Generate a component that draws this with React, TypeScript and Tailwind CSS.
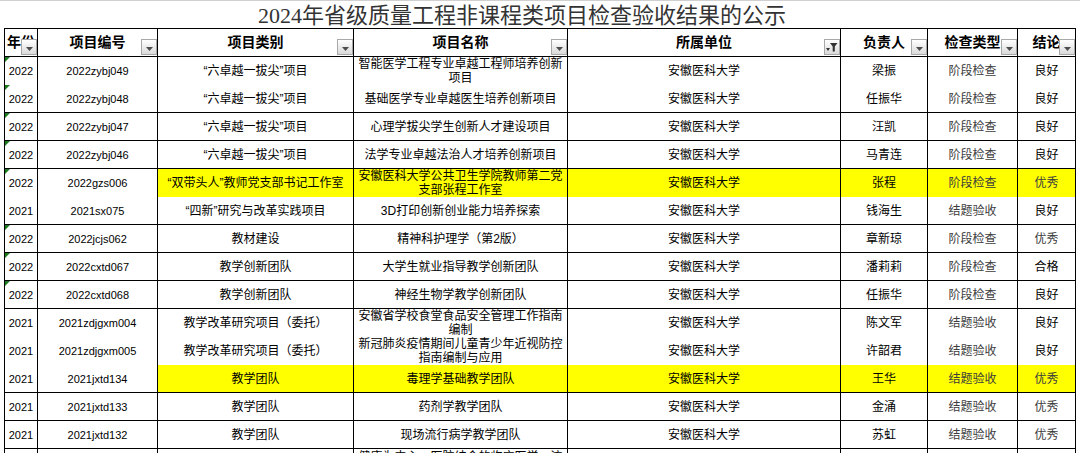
import React from 'react';

const COLS = 'grid grid-cols-[33px_120px_196px_214px_273px_87px_90px_58px]';
const FONT = "font-['Liberation_Sans','Noto_Sans_CJK_SC',sans-serif]";

type Row = {
  year: string;
  code: string;
  kind: string;
  name: string;
  unit: string;
  owner: string;
  check: string;
  result: string;
  hl?: boolean;
};

const rows: Row[] = [
  { year: '2022', code: '2022zybj049', kind: '“六卓越一拔尖”项目', name: '智能医学工程专业卓越工程师培养创新项目', unit: '安徽医科大学', owner: '梁振', check: '阶段检查', result: '良好' },
  { year: '2022', code: '2022zybj048', kind: '“六卓越一拔尖”项目', name: '基础医学专业卓越医生培养创新项目', unit: '安徽医科大学', owner: '任振华', check: '阶段检查', result: '良好' },
  { year: '2022', code: '2022zybj047', kind: '“六卓越一拔尖”项目', name: '心理学拔尖学生创新人才建设项目', unit: '安徽医科大学', owner: '汪凯', check: '阶段检查', result: '良好' },
  { year: '2022', code: '2022zybj046', kind: '“六卓越一拔尖”项目', name: '法学专业卓越法治人才培养创新项目', unit: '安徽医科大学', owner: '马青连', check: '阶段检查', result: '良好' },
  { year: '2022', code: '2022gzs006', kind: '“双带头人”教师党支部书记工作室', name: '安徽医科大学公共卫生学院教师第二党支部张程工作室', unit: '安徽医科大学', owner: '张程', check: '阶段检查', result: '优秀', hl: true },
  { year: '2021', code: '2021sx075', kind: '“四新”研究与改革实践项目', name: '3D打印创新创业能力培养探索', unit: '安徽医科大学', owner: '钱海生', check: '结题验收', result: '良好' },
  { year: '2022', code: '2022jcjs062', kind: '教材建设', name: '精神科护理学（第2版）', unit: '安徽医科大学', owner: '章新琼', check: '阶段检查', result: '优秀' },
  { year: '2022', code: '2022cxtd067', kind: '教学创新团队', name: '大学生就业指导教学创新团队', unit: '安徽医科大学', owner: '潘莉莉', check: '阶段检查', result: '合格' },
  { year: '2022', code: '2022cxtd068', kind: '教学创新团队', name: '神经生物学教学创新团队', unit: '安徽医科大学', owner: '任振华', check: '阶段检查', result: '良好' },
  { year: '2021', code: '2021zdjgxm004', kind: '教学改革研究项目（委托）', name: '安徽省学校食堂食品安全管理工作指南编制', unit: '安徽医科大学', owner: '陈文军', check: '结题验收', result: '良好' },
  { year: '2021', code: '2021zdjgxm005', kind: '教学改革研究项目（委托）', name: '新冠肺炎疫情期间儿童青少年近视防控指南编制与应用', unit: '安徽医科大学', owner: '许韶君', check: '结题验收', result: '良好' },
  { year: '2021', code: '2021jxtd134', kind: '教学团队', name: '毒理学基础教学团队', unit: '安徽医科大学', owner: '王华', check: '结题验收', result: '优秀', hl: true },
  { year: '2021', code: '2021jxtd133', kind: '教学团队', name: '药剂学教学团队', unit: '安徽医科大学', owner: '金涌', check: '结题验收', result: '优秀' },
  { year: '2021', code: '2021jxtd132', kind: '教学团队', name: '现场流行病学教学团队', unit: '安徽医科大学', owner: '苏虹', check: '结题验收', result: '优秀' },
];

function FilterBtn({ active }: { active?: boolean }) {
  return (
    <span className="absolute right-0 bottom-[1px] flex h-[16px] w-[16px] items-center justify-center border border-[#a8a8a8] bg-linear-to-b from-white to-[#dadada]">
      {active ? (
        <svg width="12" height="10" viewBox="0 0 12 10">
          <path d="M0 6h4L2 9z" fill="#333" />
          <path d="M4 1h7.5L8.8 4.5V9.5H6.7V4.5z" fill="#333" />
        </svg>
      ) : (
        <svg width="7" height="4" viewBox="0 0 7 4" className="mt-[3px]">
          <path d="M0 0h7L3.5 4z" fill="#4d4d4d" />
        </svg>
      )}
    </span>
  );
}

function Cell({
  children,
  hl,
  className = '',
}: {
  children?: React.ReactNode;
  hl?: boolean;
  className?: string;
}) {
  return (
    <div
      className={`relative flex items-center justify-center overflow-visible border-r border-b border-black px-[1px] text-center leading-[14px] whitespace-normal ${hl ? 'bg-[#ffff00]' : 'bg-white'} ${className}`}
    >
      {children}
    </div>
  );
}

export default function App() {
  const headers = ['年份', '项目编号', '项目类别', '项目名称', '所属单位', '负责人', '检查类型', '结论'];

  return (
    <div className={`h-[453px] w-[1080px] overflow-hidden bg-white text-black ${FONT}`}>
      <div className="flex h-[28px] items-center border-t border-[#d0d0d0] pt-[2px] pl-[258px]">
        <span className="font-['Liberation_Serif','Noto_Sans_CJK_SC',serif] text-[22px] leading-none text-[#333]">
          2024年省级质量工程非课程类项目检查验收结果的公示
        </span>
      </div>

      <div className="ml-[4px] w-[1072px] border-t border-l border-black">
        <div className={`${COLS} h-[28px]`}>
          {headers.map((h, i) => (
            <Cell key={h} className="text-[14px] font-bold">
              <span className="pb-[2px]">{h}</span>
              <FilterBtn active={i === 4} />
            </Cell>
          ))}
        </div>

        {rows.map((r) => (
          <div key={r.code} className={`${COLS} h-[28px]`}>
            <Cell className="text-[11px]">
              {r.year === '2022' && (
                <svg width="5" height="5" viewBox="0 0 5 5" className="absolute top-0 left-0">
                  <path d="M0 0h5L0 5z" fill="#1d7a1d" />
                </svg>
              )}
              {r.year}
            </Cell>
            <Cell className="text-[11px]">{r.code}</Cell>
            <Cell hl={r.hl} className="text-[12px]">{r.kind}</Cell>
            <Cell hl={r.hl} className="text-[12px]">{r.name}</Cell>
            <Cell hl={r.hl} className="text-[12px]">{r.unit}</Cell>
            <Cell hl={r.hl} className="text-[12px]">{r.owner}</Cell>
            <Cell hl={r.hl} className="text-[12px] text-[#3c3c3c]">{r.check}</Cell>
            <Cell hl={r.hl} className={`text-[12px] ${r.result === '优秀' ? 'text-[#3c3c3c]' : ''}`}>
              {r.result}
            </Cell>
          </div>
        ))}

        {/* next row only peeks in at the bottom edge */}
        <div className={`${COLS} h-[44px]`}>
          <Cell />
          <Cell />
          <Cell />
          <Cell className="items-start pt-[1px] text-[12px]">健康为中心、医防结合的临床医学一流</Cell>
          <Cell />
          <Cell />
          <Cell />
          <Cell />
        </div>
      </div>
    </div>
  );
}
